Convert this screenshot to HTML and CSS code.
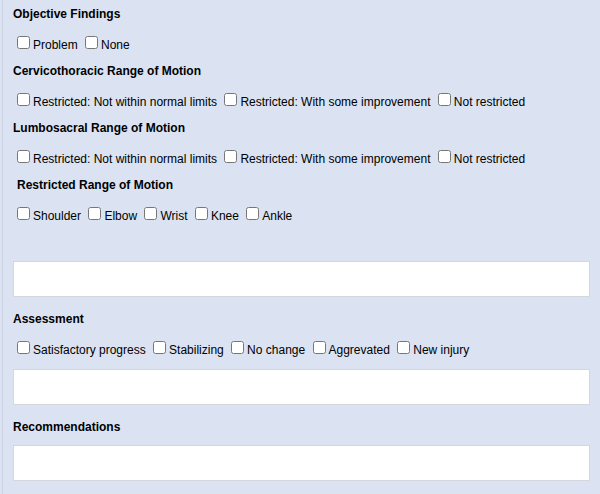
FILE: index.html
```html
<!DOCTYPE html>
<html lang="en">
<head>
    <meta charset="UTF-8">
    <meta name="viewport" content="width=device-width, initial-scale=1.0">
    <title>Objective Findings</title>
    <link rel="stylesheet" href="styles.css">
</head>
<body>

    <div class="form-panel">

        <!-- Objective Findings -->
        <div class="section-title first">Objective Findings</div>
        <div class="options">
            <label><input type="checkbox">Problem</label>
            <label><input type="checkbox">None</label>
        </div>

        <div class="section-title">Cervicothoracic Range of Motion</div>
        <div class="options">
            <label><input type="checkbox">Restricted: Not within normal limits</label>
            <label><input type="checkbox">Restricted: With some improvement</label>
            <label><input type="checkbox">Not restricted</label>
        </div>

        <div class="section-title">Lumbosacral Range of Motion</div>
        <div class="options">
            <label><input type="checkbox">Restricted: Not within normal limits</label>
            <label><input type="checkbox">Restricted: With some improvement</label>
            <label><input type="checkbox">Not restricted</label>
        </div>

        <div class="section-title indent">Restricted Range of Motion</div>
        <div class="options">
            <label><input type="checkbox">Shoulder</label>
            <label><input type="checkbox">Elbow</label>
            <label><input type="checkbox">Wrist</label>
            <label><input type="checkbox">Knee</label>
            <label><input type="checkbox">Ankle</label>
        </div>

        <textarea class="notes rom-notes"></textarea>

        <!-- Assessment -->
        <div class="section-title after-box">Assessment</div>
        <div class="options">
            <label><input type="checkbox">Satisfactory progress</label>
            <label><input type="checkbox">Stabilizing</label>
            <label><input type="checkbox">No change</label>
            <label><input type="checkbox">Aggrevated</label>
            <label><input type="checkbox">New injury</label>
        </div>

        <textarea class="notes"></textarea>

        <!-- Recommendations -->
        <div class="section-title after-box">Recommendations</div>
        <textarea class="notes"></textarea>

    </div>

</body>
</html>
```

FILE: styles.css
```css
body {
    font-family: "Liberation Sans", Arial, sans-serif;
    font-size: 12px;
    color: #000;
    background-color: #dbe3f3;
    margin: 0;
    padding: 0 0 0 2px;
}

.form-panel {
    border-left: 1px solid #cdd5e5;
    padding: 6px 10px 13px 10px;
    min-height: 475px;
    display: flex;
    flex-direction: column;
}

.section-title {
    font-weight: bold;
    line-height: 16px;
    margin-top: 9px;
}

.section-title.first {
    margin-top: 0;
}

.section-title.indent {
    padding-left: 4px;
}

.section-title.after-box {
    margin-top: 14px;
}

.options {
    margin-top: 13px;
    height: 19px;
    line-height: 20px;
    white-space: nowrap;
}

.options input[type="checkbox"] {
    width: 13px;
    height: 13px;
    margin: 0 3px 0 4px;
    vertical-align: baseline;
}

.notes {
    display: block;
    box-sizing: border-box;
    width: 100%;
    height: 36px;
    margin: 10px 0 0 0;
    padding: 4px;
    background-color: #fff;
    border: 1px solid #d4d8de;
    border-radius: 0;
    resize: none;
    font-family: "Liberation Sans", Arial, sans-serif;
    font-size: 12px;
}

.notes.rom-notes {
    margin-top: 36px;
}
```
